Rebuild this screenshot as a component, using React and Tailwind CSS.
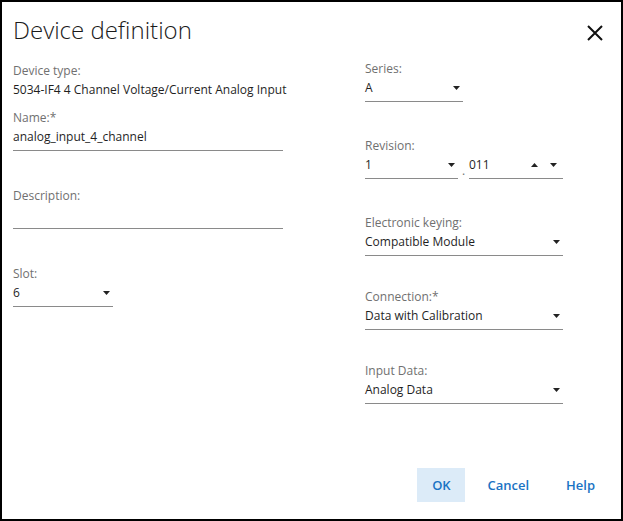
import React from "react";

const font = { fontFamily: '"Open Sans", "Noto Sans", sans-serif' };

const Caret = ({ up }) => (
  <svg width="7" height="4" viewBox="0 0 7 4" className="shrink-0">
    {up ? <path d="M0 4 L3.5 0 L7 4 Z" fill="#222" /> : <path d="M0 0 L7 0 L3.5 4 Z" fill="#222" />}
  </svg>
);

const Field = ({ label, value, select, className = "", width = "w-full" }) => (
  <div className={className}>
    <div className="h-4 text-[12px] leading-4 text-[#707070]">{label}</div>
    <div className={`mt-[3px] flex items-center justify-between pb-[5px] border-b border-[#8a8a8a] ${width}`}>
      <span className="h-4 text-[12px] leading-4 text-[#1f1f1f]">{value}</span>
      {select && (
        <span className="mr-[3px]">
          <Caret />
        </span>
      )}
    </div>
  </div>
);

export default function App() {
  return (
    <div style={font} className="w-[623px] h-[521px] border-2 border-black bg-white flex flex-col">
      {/* header */}
      <div className="h-[59px] flex justify-between">
        <h1 className="ml-[11px] mt-[13px] text-[24px] font-light leading-[30px] text-[#1a1a1a]">Device definition</h1>
        <svg width="16" height="16" viewBox="0 0 16 16" className="mt-[23px] mr-[18px]">
          <path d="M1 1 L15 15 M15 1 L1 15" stroke="#111" strokeWidth="2" />
        </svg>
      </div>

      <div className="flex">
        {/* left column */}
        <div className="ml-[11px] w-[270px]">
          <div className="mt-[2px] h-4 text-[12px] leading-4 text-[#707070]">Device type:</div>
          <div className="mt-[3px] h-4 text-[12px] leading-4 text-[#1f1f1f] whitespace-nowrap">
            5034-IF4 4 Channel Voltage/Current Analog Input
          </div>
          <Field className="mt-[12px]" label="Name:*" value="analog_input_4_channel" />
          <Field className="mt-[37px]" label="Description:" value="" />
          <Field className="mt-[37px]" label="Slot:" value="6" select width="w-[100px]" />
        </div>

        {/* right column */}
        <div className="ml-[82px] w-[198px]">
          <Field label="Series:" value="A" select width="w-[98px]" />
          <div className="mt-[36px]">
            <div className="h-4 text-[12px] leading-4 text-[#707070]">Revision:</div>
            <div className="mt-[3px] flex items-end">
              <div className="w-[93px] flex items-center justify-between pb-[5px] border-b border-[#8a8a8a]">
                <span className="h-4 text-[12px] leading-4 text-[#1f1f1f]">1</span>
                <span className="mr-[3px]">
                  <Caret />
                </span>
              </div>
              <span className="w-[11px] text-center text-[12px] leading-4 text-[#707070]">.</span>
              <div className="flex-1 flex items-center pb-[5px] border-b border-[#8a8a8a]">
                <span className="h-4 text-[12px] leading-4 text-[#1f1f1f]">011</span>
                <span className="ml-auto flex items-center gap-[12px] mr-[6px]">
                  <Caret up />
                  <Caret />
                </span>
              </div>
            </div>
          </div>
          <Field className="mt-[36px]" label="Electronic keying:" value="Compatible Module" select />
          <Field className="mt-[33px]" label="Connection:*" value="Data with Calibration" select />
          <Field className="mt-[33px]" label="Input Data:" value="Analog Data" select />
        </div>
      </div>

      {/* footer */}
      <div className="mt-auto mb-[17px] mr-[14px] flex justify-end items-center text-[13px] font-semibold text-[#1a73c4]">
        <button className="w-[48px] h-[34px] bg-[#dcebf8] pt-[2px]">OK</button>
        <button className="ml-[10px] h-[34px] px-[12px] pt-[2px]">Cancel</button>
        <button className="ml-[13px] h-[34px] px-[12px] pt-[2px]">Help</button>
      </div>
    </div>
  );
}
